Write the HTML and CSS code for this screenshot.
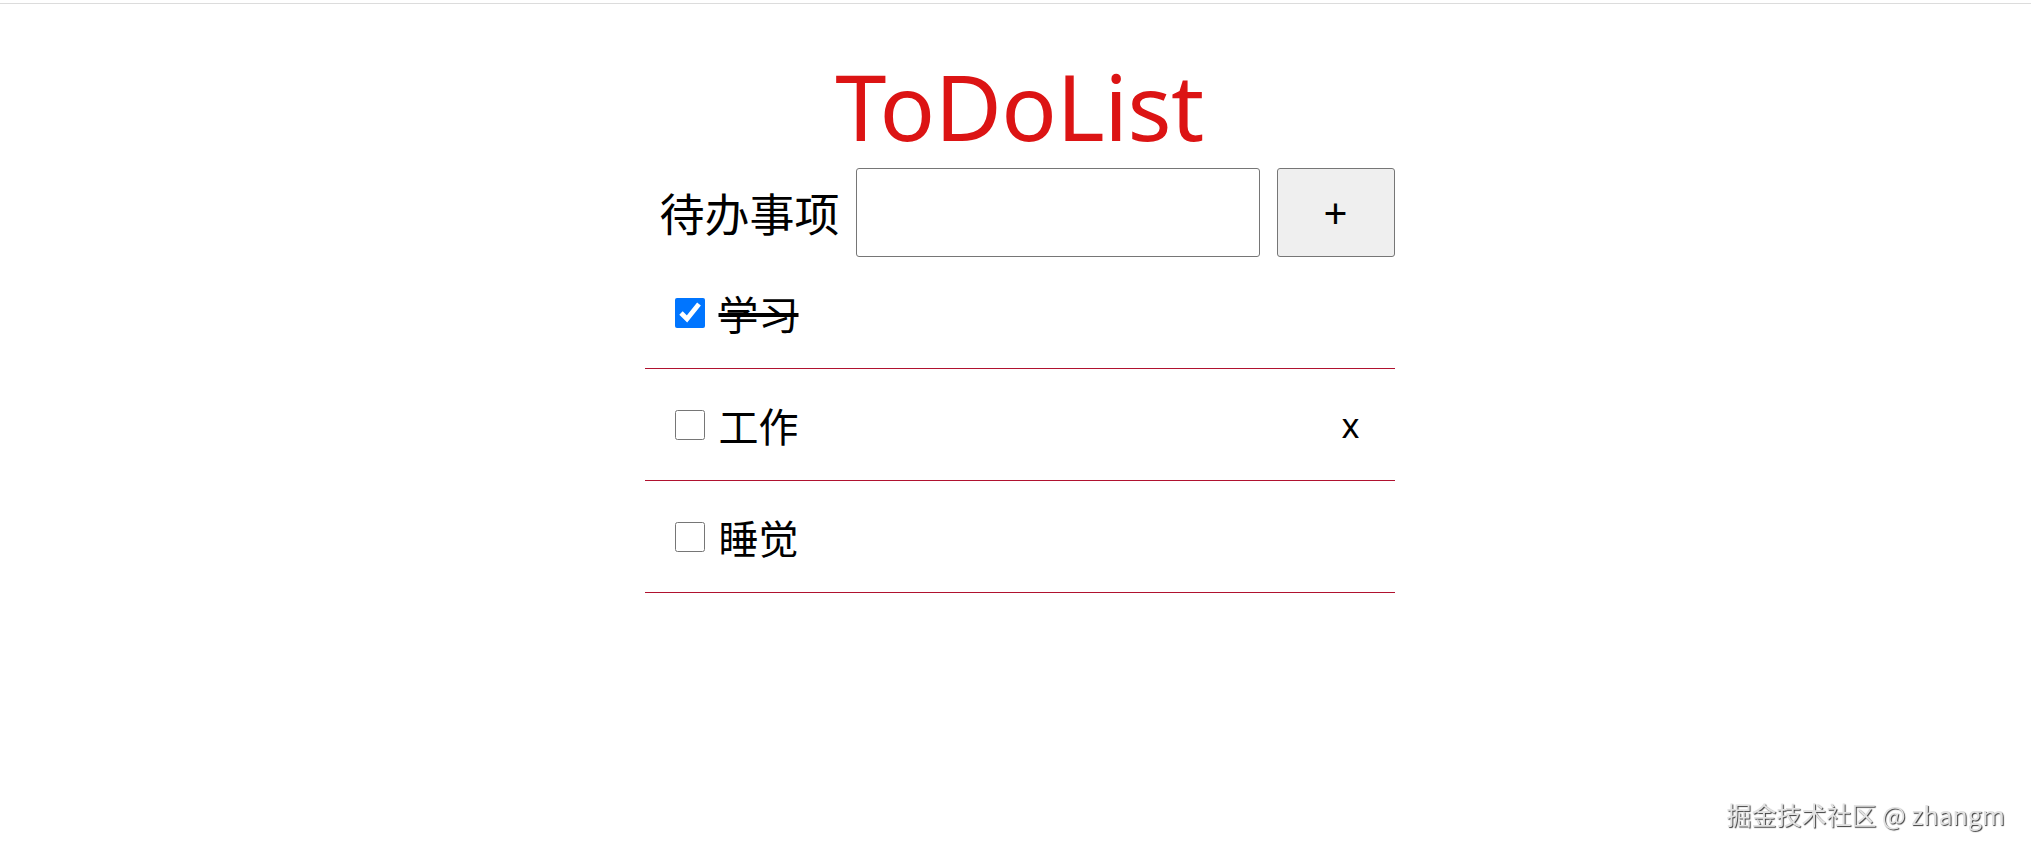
FILE: index.html
```html
<!DOCTYPE html>
<html lang="zh">
<head>
    <meta charset="UTF-8">
    <meta name="viewport" content="width=device-width, initial-scale=1.0">
    <title>ToDoList</title>
    <link rel="stylesheet" href="styles.css">
</head>
<body>
    <div class="top-line"></div>
    <div class="app">
        <h1 class="title">ToDoList</h1>
        <div class="add-row">
            <label for="todoInput">待办事项</label>
            <input type="text" id="todoInput">
            <button type="button" id="addBtn">+</button>
        </div>
        <ul class="todo-list">
            <li class="todo-item done">
                <input type="checkbox" checked>
                <span class="todo-text">学习</span>
            </li>
            <li class="todo-item">
                <input type="checkbox">
                <span class="todo-text">工作</span>
                <span class="delete">x</span>
            </li>
            <li class="todo-item">
                <input type="checkbox">
                <span class="todo-text">睡觉</span>
            </li>
        </ul>
    </div>
    <div class="watermark">掘金技术社区 @ zhangm</div>
</body>
</html>
```

FILE: styles.css
```css
* {
    margin: 0;
    padding: 0;
    box-sizing: border-box;
}

body {
    font-family: "Noto Sans", "Noto Sans CJK SC", sans-serif;
    background: #fff;
    color: #000;
    min-height: 100vh;
}

.top-line {
    margin-top: 3px;
    height: 1px;
    background: #dcdcdc;
}

/* 整体略偏右，与原图对齐 */
.app {
    width: 758px;
    margin: 0 auto;
    padding: 52px 0 0 8px;
}

.title {
    text-align: center;
    color: #dc1414;
    font-size: 92px;
    font-weight: 400;
    line-height: 100px;
    letter-spacing: -0.5px;
    margin-bottom: 12px;
}

.add-row {
    display: flex;
    align-items: center;
    justify-content: flex-end;
    height: 89px;
}

.add-row label {
    font-family: "Noto Sans CJK SC", sans-serif;
    font-size: 45px;
    margin-right: 16px;
}

.add-row input {
    width: 404px;
    height: 89px;
    border: 1px solid #767676;
    border-radius: 3px;
    font-size: 30px;
    padding: 0 10px;
    margin-right: 17px;
}

.add-row button {
    width: 118px;
    height: 89px;
    background: #efefef;
    border: 1px solid #767676;
    border-radius: 3px;
    font-size: 42px;
    line-height: 1;
    font-family: "Noto Sans", sans-serif;
    color: #000;
}

.todo-list {
    list-style: none;
}

.todo-item {
    display: flex;
    align-items: center;
    height: 112px;
    padding: 0 35px 0 30px;
    border-bottom: 1px solid #b0122f;
}

.todo-item input {
    width: 30px;
    height: 30px;
    margin: 0;
}

.todo-text {
    font-family: "Noto Sans CJK SC", sans-serif;
    font-size: 40px;
    margin-left: 14px;
}

.done .todo-text {
    text-decoration: line-through;
}

.delete {
    margin-left: auto;
    font-size: 34px;
    cursor: pointer;
}

.watermark {
    position: fixed;
    right: 26px;
    bottom: 26px;
    font-family: "Noto Sans CJK SC", sans-serif;
    font-size: 25px;
    color: #e2e2e2;
    text-shadow: 1px 1px 1px #3a3a3a;
}
```
